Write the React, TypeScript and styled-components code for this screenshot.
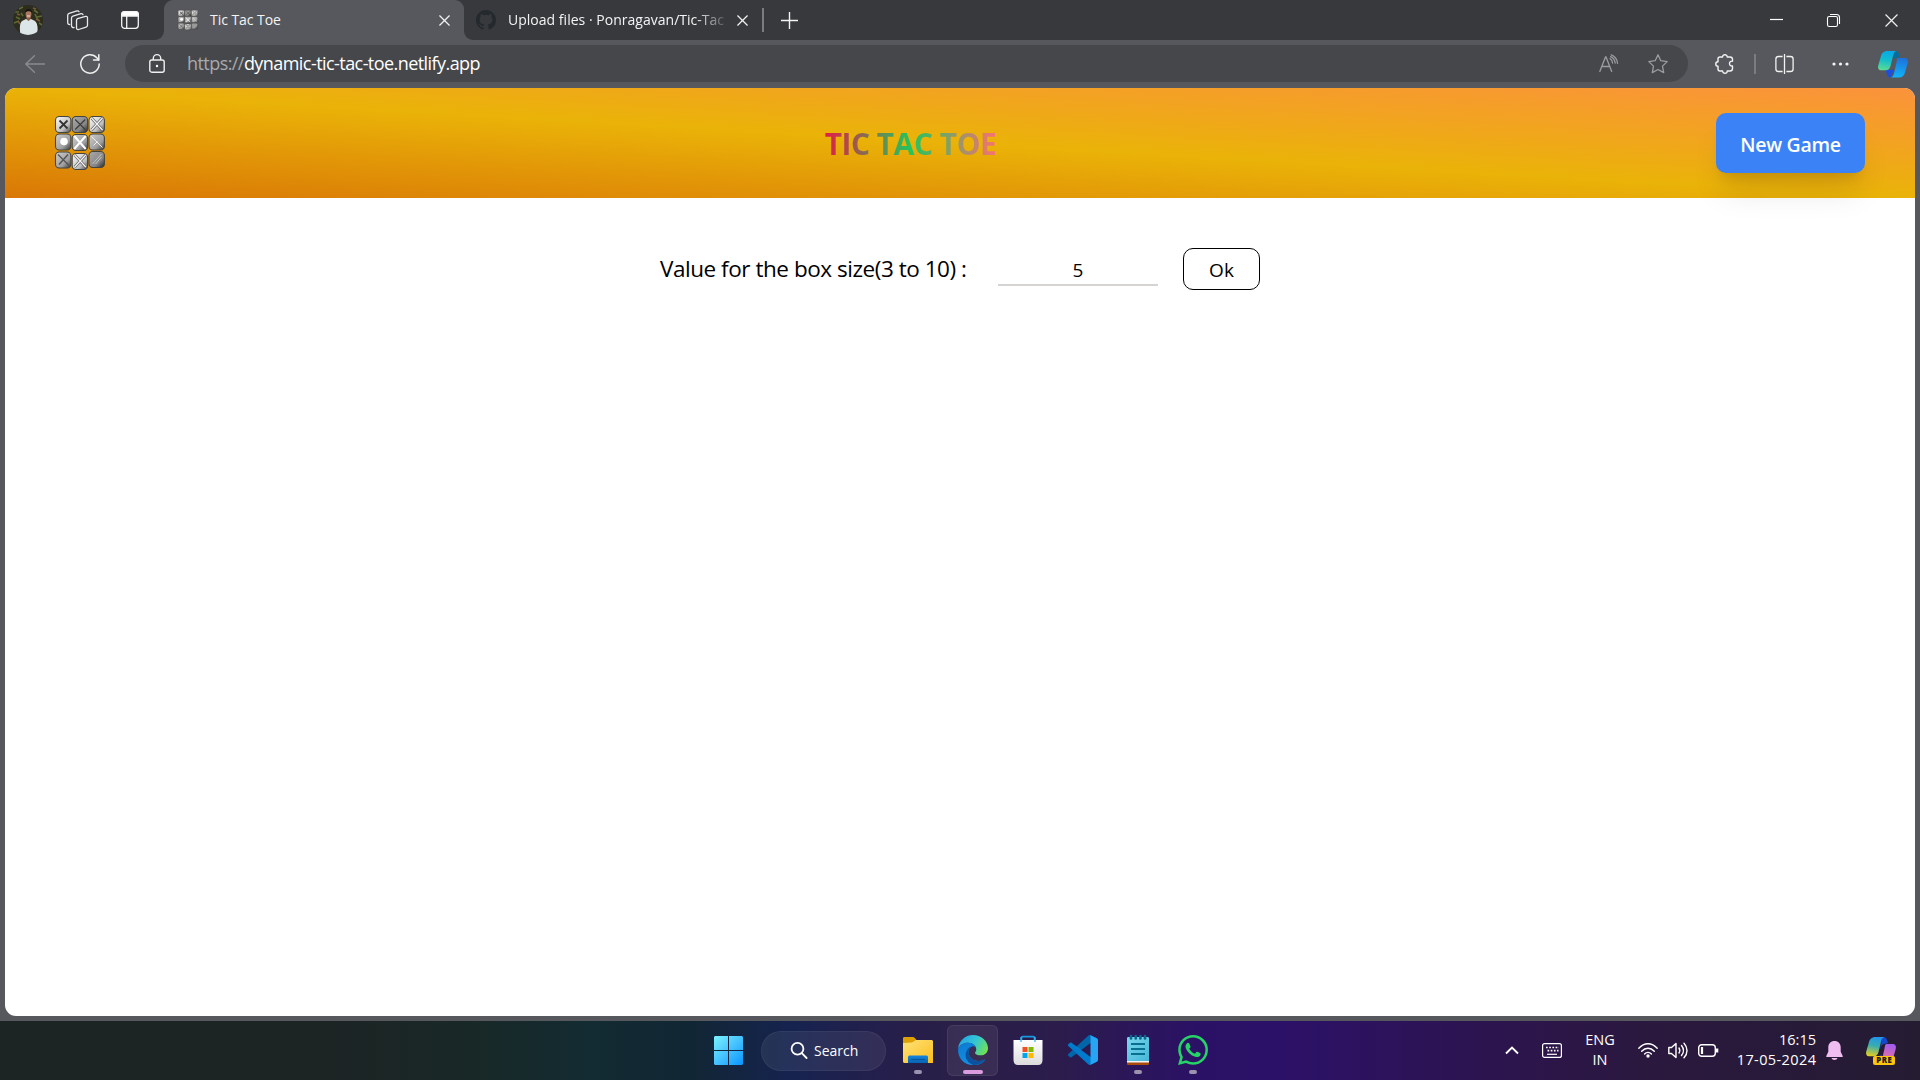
import React from "react";
import styled, { createGlobalStyle, css } from "styled-components";

const Global = createGlobalStyle`
  * { box-sizing: border-box; }
  html, body { margin: 0; padding: 0; overflow: hidden; background: #57585d; }
  body { font-family: "Open Sans", "Noto Sans", sans-serif; }
  svg { display: block; flex: none; overflow: visible; }
  button { font-family: inherit; cursor: pointer; }
`;

const Desktop = styled.div`
  width: 1920px;
  height: 1080px;
  display: flex;
  flex-direction: column;
  background: #57585d;
`;

const TabStrip = styled.div`
  height: 40px;
  flex: none;
  display: flex;
  background: #38393d;
  color: #f4f4f4;
`;

const Cell = styled.div<{ $w: number; $pt?: number }>`
  width: ${(p) => p.$w}px;
  height: 100%;
  flex: none;
  display: flex;
  align-items: center;
  justify-content: center;
  padding-top: ${(p) => p.$pt ?? 0}px;
`;

const ProfileTools = styled.div<{ $w: number }>`
  width: ${(p) => p.$w}px;
  display: flex;
  background: #38393d;
  border-bottom-right-radius: 9px;
`;

const ActiveWrap = styled.div`
  display: flex;
  background: linear-gradient(#38393d 50%, #57585d 50%);
`;

const TabTitle = styled.span<{ $fade?: boolean; $w: number; $ls?: number }>`
  width: ${(p) => p.$w}px;
  font-size: 14px;
  line-height: 20px;
  letter-spacing: ${(p) => p.$ls ?? 0}px;
  white-space: nowrap;
  ${(p) =>
    p.$fade &&
    css`
      mask-image: linear-gradient(to right, #000 86%, transparent 103%);
    `}
`;

const Tab = styled.div<{ $active?: boolean }>`
  width: 300px;
  height: 40px;
  display: flex;
  align-items: center;
  padding: 0 14px;
  gap: 12px;
  background: ${(p) => (p.$active ? "#57585d" : "#38393d")};
  border-radius: ${(p) => (p.$active ? "9px 9px 0 0" : "0 0 0 9px")};
  ${TabTitle} { margin-right: auto; }
`;

const InactiveTab = styled(Tab)`
  width: 298px;
  padding: 0 14px 0 12px;
`;

const Divider = styled.div<{ $h: number }>`
  width: 1.5px;
  height: ${(p) => p.$h}px;
  background: #7b7c80;
  align-self: center;
`;

const Spacer = styled.div`
  flex: 1;
`;

const Toolbar = styled.div`
  height: 48px;
  flex: none;
  display: flex;
  align-items: center;
  padding-bottom: 1px;
  color: #f2f2f2;
`;

const AddressBar = styled.div`
  width: 1563px;
  height: 37px;
  border-radius: 19px;
  background: #46474b;
  display: flex;
  align-items: center;
  padding: 0 20px 0 24px;
`;

const Url = styled.div`
  margin-left: 22px;
  padding-bottom: 1px;
  font-size: 18px;
  letter-spacing: -0.56px;
  line-height: 24px;
  color: #fff;
  white-space: nowrap;
`;

const Scheme = styled.span`
  color: #a9aaac;
`;

const AddressActions = styled.div`
  margin-left: auto;
  display: flex;
  align-items: center;
  gap: 29px;
  color: #9b9c9e;
`;

const Page = styled.main`
  width: 1910px;
  height: 928px;
  margin: 0 5px;
  flex: none;
  background: #fff;
  border-radius: 11px;
  overflow: hidden;
  color: #000;
`;

const Header = styled.header`
  height: 110px;
  padding: 0 50px;
  display: flex;
  align-items: center;
  justify-content: space-between;
  background: linear-gradient(to bottom left, #fb923c, #eab308, #d97706);
`;

const Title = styled.h1`
  margin: 2px 0 0;
  font-size: 30px;
  line-height: 40px;
  font-weight: 700;
  letter-spacing: -0.5px;
  background: linear-gradient(to right, #e11d48, #22c55e, #f87171);
  background-clip: text;
  -webkit-background-clip: text;
  color: transparent;
`;

const NewGame = styled.button`
  width: 149px;
  height: 60px;
  padding: 2px 0 0;
  border: 0;
  border-radius: 10px;
  background: #3b82f6;
  color: #fff;
  font-size: 19.5px;
  font-weight: 600;
  letter-spacing: -0.3px;
  box-shadow: 0 25px 31px -6px rgba(0, 0, 0, 0.1), 0 10px 12px -7px rgba(0, 0, 0, 0.1);
`;

const SizeForm = styled.div`
  display: flex;
  justify-content: center;
  align-items: center;
  padding-top: 50px;
  height: 92px;
`;

const Label = styled.label`
  width: 308px;
  font-size: 22.5px;
  letter-spacing: -0.46px;
  line-height: 30px;
  white-space: nowrap;
`;

const SizeInput = styled.input`
  width: 160px;
  height: 33px;
  margin: 0 25px 0 30px;
  padding: 3px 0 0;
  border: 0;
  border-bottom: 2px solid #d6d3d1;
  outline: 0;
  text-align: center;
  font: 19px "Open Sans", sans-serif;
  color: #000;
  background: transparent;
`;

const OkButton = styled.button`
  width: 77px;
  height: 42px;
  padding: 1px 0 0;
  border: 1px solid #000;
  border-radius: 10px;
  background: #fff;
  font-size: 19px;
  color: #000;
`;

const Taskbar = styled.footer`
  height: 59px;
  margin-top: 5px;
  flex: none;
  display: flex;
  align-items: center;
  color: #fff;
  background: linear-gradient(
    to right,
    #1c2424 0, #1c2424 330px, #192826 460px, #132b32 590px, #112634 690px,
    #16234f 790px, #241f4c 880px, #2a1f47 960px, #2b1c4c 1060px, #2b1166 1200px,
    #2c1168 1280px, #2c1450 1480px, #2b183f 1640px, #271a38 1800px, #251c32 1920px
  );
`;

const TaskGroup = styled.div`
  height: 100%;
  margin-left: 701px;
  display: flex;
  align-items: center;
`;

const SearchBox = styled.div`
  width: 125px;
  height: 40px;
  margin: 0 4px 0 5px;
  padding-bottom: 1px;
  border-radius: 20px;
  border: 1px solid rgba(255, 255, 255, 0.05);
  background: rgba(255, 255, 255, 0.07);
  display: flex;
  align-items: center;
  padding-left: 28px;
  gap: 6px;
  font-size: 14px;
  letter-spacing: 0;
`;

const TaskButton = styled.div<{ $active?: boolean }>`
  width: 51px;
  height: 51px;
  margin: 0 2px;
  border-radius: 6px;
  display: flex;
  flex-direction: column;
  align-items: center;
  padding-top: 9px;
  border: 1px solid ${(p) => (p.$active ? "rgba(255,255,255,.07)" : "transparent")};
  background: ${(p) => (p.$active ? "rgba(255,255,255,.07)" : "transparent")};
`;

const Indicator = styled.div<{ $active?: boolean }>`
  width: ${(p) => (p.$active ? 20 : 8)}px;
  height: 4px;
  margin-top: 5px;
  border-radius: 2px;
  background: ${(p) => (p.$active ? "#dc9de0" : "#9b93ad")};
`;

const Tray = styled.div`
  margin-left: auto;
  height: 100%;
  display: flex;
  align-items: center;
`;

const TrayText = styled.div<{ $w: number; $right?: boolean }>`
  width: ${(p) => p.$w}px;
  display: flex;
  flex-direction: column;
  align-items: ${(p) => (p.$right ? "flex-end" : "center")};
  padding-bottom: 1px;
  font-size: 14.5px;
  line-height: 20px;
`;

const DateLine = styled.span`
  letter-spacing: 0.4px;
  margin-right: -0.4px;
`;

const TrayIcon = styled.div<{ $ml: number }>`
  margin-left: ${(p) => p.$ml}px;
`;

const TILES = [
  { x: 0, y: 0, g: "light", m: "dark" },
  { x: 16.700, y: 0, g: "dark", m: "cut" },
  { x: 33.500, y: 0, g: "light", m: "etched" },
  { x: 0, y: 17.500, g: "mid", m: "o" },
  { x: 16.700, y: 18, g: "mid", m: "white" },
  { x: 33.500, y: 17.500, g: "mid", m: "slash" },
  { x: 0, y: 35.500, g: "mid", m: "grey" },
  { x: 16.700, y: 37, g: "light", m: "etched" },
  { x: 33.500, y: 35, g: "dark", m: "back" },
];

function TileMark({ kind }: { kind: string }) {
  switch (kind) {
    case "o":
      return <circle cx="9" cy="8" r="3.800" fill="#fff" />;
    case "dark":
      return <path d="M4.500 4.500l8 8m0-8l-8 8" stroke="#333" strokeWidth="1.800" />;
    case "cut":
      return <path d="M3.500 3.500l10 10m0-10l-10 10" stroke="#3d3d3d" strokeWidth="1.200" />;
    case "white":
      return <path d="M2.500 2l11.500 13M14 2L2.500 15" stroke="#fff" strokeWidth="1.900" />;
    case "grey":
      return <path d="M3 3l11 11M13 3L4 13" stroke="#555" strokeWidth="1.400" />;
    case "slash":
      return <path d="M3 3l11 11M5 12l4-4" stroke="#eee" strokeWidth="1" />;
    case "back":
      return <path d="M13 3L4 13M7 13l6-7" stroke="#c4c4c4" strokeWidth="1" />;
    default:
      return (
        <g fill="none">
          <path d="M3 2l11 12M14 2L3 14" stroke="#666" strokeWidth="2.600" />
          <path d="M3 2l11 12M14 2L3 14" stroke="#f5f5f5" strokeWidth="1.200" />
        </g>
      );
  }
}

function BoardLogo({ w, h, id }: { w: number; h: number; id: string }) {
  const stops: Record<string, string[]> = {
    light: ["#ededed", "#c0c0c0", "#444"],
    mid: ["#c4c4c4", "#9f9f9f", "#333"],
    dark: ["#a2a2a2", "#858585", "#222"],
  };
  return (
    <svg width={w} height={h} viewBox="0 0 50 54" preserveAspectRatio="none">
      <defs>
        {Object.keys(stops).map((k) => (
          <linearGradient key={k} id={id + k} x1="0" y1="0" x2="1" y2="1">
            <stop offset="0.150" stopColor={stops[k][0]} />
            <stop offset="0.650" stopColor={stops[k][1]} />
            <stop offset="1" stopColor={stops[k][2]} />
          </linearGradient>
        ))}
      </defs>
      {TILES.map((t) => (
        <g key={`${t.x}-${t.y}`} transform={`translate(${t.x} ${t.y})`}>
          <rect x="0.500" y="0.500" width="15.400" height="16" rx="3.800" fill={`url(#${id}${t.g})`} stroke="#45443f" strokeWidth="1.100" />
          <TileMark kind={t.m} />
        </g>
      ))}
    </svg>
  );
}

const Avatar = () => (
  <svg width="30" height="30" viewBox="0 0 30 30">
    <defs>
      <clipPath id="avatar"><circle cx="15" cy="15" r="15" /></clipPath>
    </defs>
    <g clipPath="url(#avatar)">
      <rect width="30" height="30" fill="#2c2d1c" />
      <path d="M2 7h4M3 12l4 2M1 18l5-2M21 5l4 3M24 12l5-1M22 9l3 6M26 18l3 2M6 4l4-2M8 8l2 3" stroke="#5d6a33" strokeWidth="1.600" />
      <path d="M4 9l3 1M23 14l4 2M5 16l2 3M20 3l3 1" stroke="#80593a" strokeWidth="1.500" />
      <path d="M7.500 30c-1-6-1-12 1.500-14l4-2h5l4 2c3 3 3 8 2 14z" fill="#dce5e8" />
      <path d="M13.500 10h4v4.500l-2 1.500-2-1.500z" fill="#8b5e48" />
      <ellipse cx="15.500" cy="9" rx="2.900" ry="4.200" fill="#a97861" />
      <path d="M12 8c-.5-5.500 7.500-5.500 7 0-1-2.500-5.500-2.500-7 0z" fill="#17130f" />
      <path d="M14 11h3" stroke="#f3e5dd" />
    </g>
  </svg>
);

const Workspaces = () => (
  <svg width="22" height="21" viewBox="0 0 22 21" fill="none" stroke="#e9e9e9" strokeWidth="1.300" strokeLinejoin="round" strokeLinecap="round">
    <path d="M10.500 8.700l8-2.300c1-.3 2 .3 2 1.500v7.300c0 1-.5 1.600-1.400 1.900l-7.500 2.400c-1.200.3-2.100-.3-2.100-1.500v-7.500c0-1 .3-1.500 1-1.800z" />
    <path d="M7 17.500c-1.500.2-2.500-.5-2.500-2V8c0-1 .5-1.600 1.400-1.900L14 3.600c1-.2 1.800.2 2 1" />
    <path d="M2.700 14.500C1.300 14.500.7 13.700.7 12.500V5.300c0-1 .5-1.600 1.400-1.900L10 .9c1-.2 1.700.1 2 .8" />
  </svg>
);

const SidebarTabs = () => (
  <svg width="18" height="18" viewBox="0 0 18 18" fill="none" stroke="#f4f4f4" strokeWidth="1.300">
    <rect x=".7" y=".7" width="16.600" height="16.600" rx="3" />
    <path d="M.7 3.500c0-2 1-2.800 3-2.800h10.600c2 0 3 .8 3 2.800V5H.7z" fill="#fff" />
    <path d="M5.700 5v12" />
  </svg>
);

const Close = ({ s = 11, c = "#f0f0f0", w = 1.4 }: { s?: number; c?: string; w?: number }) => (
  <svg width={s} height={s} viewBox="0 0 12 12" stroke={c} strokeWidth={w}>
    <path d="M.5.5l11 11m0-11l-11 11" />
  </svg>
);

const GitHub = () => (
  <svg width="20" height="20" viewBox="0 0 16 16" fill="#24292e">
    <path d="M8 0C3.580 0 0 3.580 0 8c0 3.540 2.290 6.530 5.470 7.590.4.070.55-.17.55-.38 0-.19-.01-.82-.01-1.490-2.010.37-2.530-.49-2.690-.94-.09-.23-.48-.94-.82-1.130-.28-.15-.68-.52-.01-.53.63-.01 1.080.58 1.230.82.72 1.210 1.870.87 2.330.66.07-.52.28-.87.51-1.070-1.780-.2-3.640-.89-3.640-3.950 0-.87.31-1.590.82-2.150-.08-.2-.36-1.020.08-2.120 0 0 .67-.21 2.200.82a7.400 7.400 0 0 1 4 0c1.530-1.040 2.200-.82 2.200-.82.44 1.100.16 1.920.08 2.120.51.56.82 1.270.82 2.150 0 3.070-1.870 3.750-3.650 3.950.29.25.54.73.54 1.480 0 1.070-.01 1.930-.01 2.200 0 .21.15.46.55.38A8 8 0 0 0 16 8c0-4.420-3.580-8-8-8z" />
  </svg>
);

const Plus = () => (
  <svg width="17" height="17" viewBox="0 0 17 17" stroke="#f4f4f4" strokeWidth="1.400">
    <path d="M8.500 0v17M0 8.500h17" />
  </svg>
);

const Minimize = () => (
  <svg width="13" height="2" viewBox="0 0 13 2"><path d="M0 .5h13" stroke="#fff" strokeWidth="1.200" /></svg>
);

const Restore = () => (
  <svg width="13" height="13" viewBox="0 0 13 13" fill="none" stroke="#fff" strokeWidth="1.100">
    <rect x=".5" y="2.500" width="10" height="10" rx="1.800" />
    <path d="M3 .5h6.500c2 0 3 1 3 3V10" />
  </svg>
);

const Back = () => (
  <svg width="20" height="18" viewBox="0 0 20 18" fill="none" stroke="#8a8b8e" strokeWidth="1.400" strokeLinecap="round">
    <path d="M19.500 9H.8M9.500.8L.8 9l8.700 8.200" />
  </svg>
);

const Refresh = () => (
  <svg width="20" height="20" viewBox="0 0 20 20" fill="none" stroke="#f0f0f0" strokeWidth="1.500" strokeLinecap="round" strokeLinejoin="round">
    <path d="M19.200 10A9.200 9.200 0 1 1 16.800 3.800L18.700 6" />
    <path d="M18.800.8V6h-5.300" />
  </svg>
);

const Lock = () => (
  <svg width="16" height="19" viewBox="0 0 16 19" fill="none" stroke="#f0f0f0" strokeWidth="1.400">
    <rect x=".8" y="6" width="14.400" height="12.200" rx="2" />
    <path d="M4.300 6V4.300a3.700 3.700 0 0 1 7.400 0V6" />
    <circle cx="8" cy="12" r="1.200" fill="#fff" stroke="none" />
  </svg>
);

const ReadAloud = () => (
  <svg width="20" height="19" viewBox="0 0 20 19" fill="none" stroke="currentColor" strokeWidth="1.300" strokeLinecap="round">
    <path d="M.8 17.500L6.500 3h.5l5.700 14.500M3 12.500h7.500" />
    <path d="M11 4.500c1.600 1 2.500 2.600 2.600 4.500M12.200.8c3.800 1.400 6 4.600 6.300 8.500M11.600 2.600c2.800 1.300 4.300 3.500 4.600 6.400" />
  </svg>
);

const Star = () => (
  <svg width="20" height="20" viewBox="0 0 20 20" fill="none" stroke="currentColor" strokeWidth="1.300" strokeLinejoin="round">
    <path d="M10 .8l2.800 5.900 6.400.9-4.700 4.500 1.200 6.500L10 15.500l-5.700 3.100 1.200-6.500L.8 7.600l6.400-.9z" />
  </svg>
);

const Puzzle = () => (
  <svg width="19" height="20" viewBox="0 0 19 20" fill="none" stroke="currentColor" strokeWidth="1.400" strokeLinejoin="round">
    <path d="M5 3h2.600c-.2-3 4.700-3 4.600 0H15c1.500 0 2.500 1 2.500 2.500v1.700c-4-.5-4 5.300 0 4.800v2.500c0 1.500-1 2.500-2.500 2.500h-2.800c.3 3-4.600 3-4.600 0H5c-1.200 0-2-.7-2-2v-2.800c-3-.2-3-4.400 0-4.500V5c0-1.200.8-2 2-2z" />
  </svg>
);

const Split = () => (
  <svg width="19" height="20" viewBox="0 0 19 20" fill="none" stroke="currentColor" strokeWidth="1.300">
    <path d="M7.600 2.500H3.500c-1.600 0-2.600 1-2.600 2.600v9.800c0 1.600 1 2.600 2.600 2.600h4.100M11.400 2.500h4.100c1.600 0 2.600 1 2.600 2.600v9.800c0 1.600-1 2.600-2.600 2.600h-4.100M9.500 0v20" />
  </svg>
);

const Dots = () => (
  <svg width="17" height="4" viewBox="0 0 17 4" fill="#f4f4f4">
    <circle cx="2" cy="2" r="1.600" /><circle cx="8.500" cy="2" r="1.600" /><circle cx="15" cy="2" r="1.600" />
  </svg>
);

function Copilot({ pre }: { pre?: boolean }) {
  const id = pre ? "cpPre" : "cp";
  return (
    <svg width={pre ? 29 : 30} height={pre ? 28 : 27} viewBox={pre ? "0 0 29 28" : "0 0 30 27"}>
      <defs>
        <linearGradient id={id + "a"} x1="0.500" y1="0" x2="0.300" y2="1">
          <stop offset="0" stopColor={pre ? "#2395ea" : "#08a8e8"} />
          <stop offset=".45" stopColor={pre ? "#37adb0" : "#12bbcf"} />
          <stop offset="1" stopColor={pre ? "#e4cf22" : "#5bdc91"} />
        </linearGradient>
        <linearGradient id={id + "b"} x1="0.500" y1="0" x2="0.300" y2="1">
          <stop offset="0" stopColor={pre ? "#a25cf0" : "#1d73dc"} />
          <stop offset="1" stopColor={pre ? "#ff7783" : "#12b5fa"} />
        </linearGradient>
      </defs>
      <path d="M16 0h1c3 0 4 2 5 6l-4 1c-2 0-3 2-4 6l2-11z" fill={pre ? "#1748cb" : "#066c9a"} />
      <path d="M8 19h5l3-1-3 8c-3 1-4-1-5-7z" fill="#1b4fe0" />
      <path d="M10 0h9c-3 0-3.500 3-4.500 7l-2 8c-1 3-2 4.300-5 4.300H3.500C.5 19.300-.5 17 .4 14L3 5C4 1.500 6 0 10 0z" fill={`url(#${id}a)`} />
      <path d="M20.500 7H26c3.500 0 4.500 2 3.700 5L27 21.500c-1 3.500-3 5-6 5h-9c2.500 0 3.500-2 4.300-5l2.200-10C19 8.500 19 7 20.500 7z" fill={`url(#${id}b)`} />
      {pre && (
        <g>
          <rect x="7" y="19" width="22" height="9" rx="2" fill="#ffc40c" />
          <text x="18.300" y="26.300" textAnchor="middle" fontFamily="Open Sans" fontWeight="800" fontSize="7.800" letterSpacing=".6" fill="#231b24">PRE</text>
        </g>
      )}
    </svg>
  );
}

const Windows = () => (
  <svg width="29" height="29" viewBox="0 0 29 29">
    <defs>
      <linearGradient id="win" x1="0" y1="0" x2="29" y2="29" gradientUnits="userSpaceOnUse">
        <stop offset="0" stopColor="#7af2ff" /><stop offset=".5" stopColor="#46c3ff" /><stop offset="1" stopColor="#0794ff" />
      </linearGradient>
    </defs>
    <path d="M1 0h13v14H0V1zM15 0h13l1 1v13H15zM0 15h14v14H1l-1-1zM15 15h14v13l-1 1H15z" fill="url(#win)" />
  </svg>
);

const Search = () => (
  <svg width="18" height="17" viewBox="0 0 18 17" fill="none" stroke="#fff" strokeWidth="1.800" strokeLinecap="round">
    <circle cx="7.500" cy="6.800" r="5.900" /><path d="M11.800 11.200l4.800 4.800" />
  </svg>
);

const Folder = () => (
  <svg width="30" height="30" viewBox="0 0 30 30">
    <defs>
      <linearGradient id="fold" x1="0" y1="0" x2="1" y2="1"><stop offset="0" stopColor="#ffe27a" /><stop offset="1" stopColor="#fbbd1c" /></linearGradient>
      <linearGradient id="foldb" x1="0" y1="0" x2="0" y2="1"><stop offset="0" stopColor="#1285df" /><stop offset="1" stopColor="#0765b5" /></linearGradient>
    </defs>
    <path d="M0 3.500C0 2.500.6 2 1.500 2h8c1 0 1.600.3 2.200 1L14 5.500V10H0z" fill="#dfa006" />
    <path d="M0 8l9-.5L13 5h16l1 1v22H1l-1-1z" fill="url(#fold)" />
    <path d="M5 28v-5.500c0-1.500.7-2 2-2h16c1.300 0 2 .5 2 2V28z" fill="url(#foldb)" />
    <path d="M8 24.500h14" stroke="#07559a" strokeWidth="1.200" />
  </svg>
);

const Edge = () => (
  <svg width="30" height="30" viewBox="0 0 24 24">
    <defs>
      <linearGradient id="edgeTop" x1="0" y1=".3" x2="1" y2=".7"><stop offset="0" stopColor="#26a5e3" /><stop offset=".5" stopColor="#33c5d5" /><stop offset="1" stopColor="#72e34d" /></linearGradient>
      <linearGradient id="edgeLow" x1="0" y1="0" x2=".6" y2="1"><stop offset="0" stopColor="#0c79d2" /><stop offset="1" stopColor="#1394e3" /></linearGradient>
    </defs>
    <path d="M.1 11C.6 4.600 5.700 0 12 0c7.300 0 12 5.400 12 10.500 0 3.600-2.700 5.700-5.900 5.700-3 0-4.500-1-4.500-1.900 0-.6 1-.9 1-2.900 0-2.700-2.700-5.200-6.500-5.200C4.500 6.200 1.300 8 .1 11z" fill="url(#edgeTop)" />
    <path d="M.1 11C1.300 8 4.500 6.200 8.100 6.200c3 0 5.200 1.600 6.100 3.500-1-.8-2-.9-2.800-.7-3 1.300-3.700 5.400-1.800 8.400 2.200 3.500 7.500 4.400 11.400 2.400.5-.2.800.2.500.6A12 12 0 0 1 12 24C4.500 24-.5 18 .1 11z" fill="url(#edgeLow)" />
    <path d="M9.300 9.800c-5.500 4.300-3.600 12.500 3.200 14.200 3.500 0 6.900-1.500 9-3.600.3-.4 0-.8-.5-.6-4 2-9.200 1.100-11.400-2.400-1.600-2.600-1.400-5.700.7-7.700z" fill="#0b519e" />
  </svg>
);

const Store = () => (
  <svg width="30" height="30" viewBox="0 0 30 30">
    <defs><linearGradient id="bag" x1="0" y1="0" x2="0" y2="1"><stop offset="0" stopColor="#fff" /><stop offset="1" stopColor="#dcdcdc" /></linearGradient></defs>
    <path d="M8.500 7V3c0-1 .4-1.300 1.300-1.300h10.400c.9 0 1.300.3 1.300 1.300v4" fill="none" stroke="#1997e0" strokeWidth="1.700" />
    <path d="M.5 5h29v20c0 3-1.500 5-4.500 5H5C2 30 .5 28 .5 25z" fill="url(#bag)" />
    <path d="M8 2v5M22 2v5" stroke="#37b5ee" strokeWidth="1.300" />
    <path d="M9.500 12h5v5h-5z" fill="#f25022" /><path d="M15.500 12h5v5h-5z" fill="#7fba00" />
    <path d="M9.500 18h5v5h-5z" fill="#00a4ef" /><path d="M15.500 18h5v5h-5z" fill="#ffb900" />
  </svg>
);

const VSCode = () => (
  <svg width="30" height="30" viewBox="0 0 100 100">
    <path d="M96 11L75 1c-2-1-5-.6-7 1L1 63c-2 2-2 5 0 6l6 5c1.500 1.400 4 1.500 5 .3L93 13c3-2 6 0 6 3z" fill="#0065a9" />
    <path d="M96 89L75 99c-2 1-5 .6-7-1L1 37c-2-2-2-5 0-6l6-5c1.500-1.400 4-1.500 5-.3L93 87c3 2 6 0 6-3z" fill="#007acc" />
    <path d="M75 99c-2 1-5 .6-7-1 2.500 2.500 7 .7 7-3V5c0-3.700-4.500-5.500-7-3 2-1.600 5-2 7-1l21 10c2 1 4 3 4 6v66c0 3-2 5-4 6z" fill="#27a4f4" />
  </svg>
);

const Notepad = () => (
  <svg width="22" height="30" viewBox="0 0 22 30">
    <defs><linearGradient id="note" x1="0" y1="0" x2="1" y2="1"><stop offset="0" stopColor="#7ad8ee" /><stop offset="1" stopColor="#45b6d8" /></linearGradient></defs>
    <path d="M0 25h22v3.500c0 1-.5 1.500-1.500 1.500h-19C.5 30 0 29.500 0 28.500z" fill="#a84b0c" />
    <path d="M0 24h22v3.500H0z" fill="#f4f4f4" />
    <path d="M0 3.500C0 2.500.5 2 1.500 2h19c1 0 1.500.5 1.500 1.500V26H0z" fill="url(#note)" />
    <path d="M4 9h14M4 14h14M4 19h14" stroke="#086f91" strokeWidth="1.800" />
    {[4, 8.700, 13.400, 18].map((x) => <path key={x} d={`M${x} 1v2.500`} stroke="#0a668a" strokeWidth="2.600" strokeLinecap="round" />)}
  </svg>
);

const WhatsApp = () => (
  <svg width="30" height="30" viewBox="0 0 24 24" fill="#25d366">
    <path d="M17.472 14.382c-.297-.149-1.758-.867-2.030-.967-.273-.099-.471-.148-.67.15-.197.297-.767.966-.94 1.164-.173.199-.347.223-.644.075-.297-.15-1.255-.463-2.390-1.475-.883-.788-1.480-1.761-1.653-2.059-.173-.297-.018-.458.13-.606.134-.133.298-.347.446-.52.149-.174.198-.298.298-.497.099-.198.05-.371-.025-.52-.075-.149-.669-1.612-.916-2.207-.242-.579-.487-.5-.669-.51-.173-.008-.371-.01-.57-.01-.198 0-.52.074-.792.372-.272.297-1.040 1.016-1.040 2.479 0 1.462 1.065 2.875 1.213 3.074.149.198 2.096 3.200 5.077 4.487.709.306 1.262.489 1.694.625.712.227 1.360.195 1.871.118.571-.085 1.758-.719 2.006-1.413.248-.694.248-1.289.173-1.413-.074-.124-.272-.198-.57-.347zM12.051 21.785h-.004a9.870 9.870 0 0 1-5.031-1.378l-.361-.214-3.741.982.998-3.648-.235-.374a9.860 9.860 0 0 1-1.510-5.260c.001-5.450 4.436-9.884 9.888-9.884a9.820 9.820 0 0 1 6.988 2.898 9.825 9.825 0 0 1 2.893 6.994c-.003 5.450-4.437 9.884-9.885 9.884zM20.464 3.488A11.815 11.815 0 0 0 12.050 0C5.495 0 .16 5.335.157 11.892c0 2.096.547 4.142 1.588 5.945L.057 24l6.305-1.654a11.882 11.882 0 0 0 5.683 1.448h.005c6.554 0 11.890-5.335 11.893-11.893a11.821 11.821 0 0 0-3.480-8.413z" />
  </svg>
);

const Chevron = () => (
  <svg width="14" height="9" viewBox="0 0 14 9" fill="none" stroke="#fff" strokeWidth="1.900"><path d="M1 7.500l6-6 6 6" /></svg>
);

const Keyboard = () => (
  <svg width="20" height="15" viewBox="0 0 20 15" fill="none" stroke="#fff" strokeWidth="1.200">
    <rect x=".6" y=".6" width="18.800" height="13.800" rx="2" />
    <path d="M4 4.500h13M5.500 7.700h11" strokeWidth="1.700" strokeDasharray="1.700 1.500" />
    <path d="M5 11.300h10" />
  </svg>
);

const Wifi = () => (
  <svg width="20" height="15" viewBox="0 0 20 15" fill="none" stroke="#fff" strokeWidth="1.400" strokeLinecap="round">
    <path d="M.8 5.300c5.300-6 13.100-6 18.400 0M3.700 8.300c3.700-4 8.900-4 12.600 0M6.600 11c2-2.200 4.800-2.200 6.800 0" />
    <circle cx="10" cy="13" r="1.700" fill="#fff" stroke="none" />
  </svg>
);

const Volume = () => (
  <svg width="20" height="17" viewBox="0 0 20 17" fill="none" stroke="#fff" strokeWidth="1.400" strokeLinecap="round" strokeLinejoin="round">
    <path d="M.8 5.500h2.700L8 1.500v14l-4.500-4H.8zM11 6c1 1.500 1 3.500 0 5M13.500 3.500c2.400 3 2.400 7 0 10M16 1.200c4 4.300 4 10.300 0 14.600" />
  </svg>
);

const Battery = () => (
  <svg width="21" height="13" viewBox="0 0 21 13" fill="none" stroke="#fff" strokeWidth="1.400">
    <rect x=".7" y=".7" width="16.600" height="11.600" rx="3" /><path d="M4 3v7" strokeWidth="2.200" /><path d="M19 4.500v4" strokeWidth="2.600" />
  </svg>
);

const Bell = () => (
  <svg width="17" height="20" viewBox="0 0 17 20" fill="#efbdf0">
    <path d="M8.500 0C4.800 0 2.300 2.700 2.300 6.200v4.600L.3 15v1h16.400v-1l-2-4.200V6.200C14.700 2.700 12.200 0 8.500 0zM5.500 17h6c-.3 1.300-1.500 2-3 2s-2.700-.7-3-2z" />
  </svg>
);

export default function App() {
  return (
    <>
      <Global />
      <Desktop>
        <TabStrip>
          <ActiveWrap>
            <ProfileTools $w={164}>
              <Cell $w={56}><Avatar /></Cell>
              <Cell $w={44}><Workspaces /></Cell>
              <Cell $w={60}><SidebarTabs /></Cell>
            </ProfileTools>
            <Tab $active>
              <BoardLogo w={20} h={20} id="fav" />
              <TabTitle $w={80} $ls={-0.05}>Tic Tac Toe</TabTitle>
              <Close />
            </Tab>
            <InactiveTab>
              <GitHub />
              <TabTitle $w={219} $fade $ls={0.02}>Upload files · Ponragavan/Tic-Tac</TabTitle>
              <Close />
            </InactiveTab>
          </ActiveWrap>
          <Divider $h={24} />
          <Cell $w={51}><Plus /></Cell>
          <Spacer />
          <Cell $w={57}><Minimize /></Cell>
          <Cell $w={57}><Restore /></Cell>
          <Cell $w={58}><Close s={13} w={1.1} /></Cell>
        </TabStrip>

        <Toolbar>
          <Cell $w={70}><Back /></Cell>
          <Cell $w={40}><Refresh /></Cell>
          <Cell $w={15} />
          <AddressBar>
            <Lock />
            <Url><Scheme>https://</Scheme>dynamic-tic-tac-toe.netlify.app</Url>
            <AddressActions><ReadAloud /><Star /></AddressActions>
          </AddressBar>
          <Cell $w={6} />
          <Cell $w={60}><Puzzle /></Cell>
          <Divider $h={20} />
          <Cell $w={57}><Split /></Cell>
          <Cell $w={55}><Dots /></Cell>
          <Cell $w={50} $pt={1}><Copilot /></Cell>
        </Toolbar>

        <Page>
          <Header>
            <BoardLogo w={50} h={54} id="logo" />
            <Title>TIC TAC TOE</Title>
            <NewGame>New Game</NewGame>
          </Header>
          <SizeForm>
            <Label htmlFor="size">Value for the box size(3 to 10) :</Label>
            <SizeInput id="size" defaultValue="5" />
            <OkButton>Ok</OkButton>
          </SizeForm>
        </Page>

        <Taskbar>
          <TaskGroup>
            <Cell $w={55}><Windows /></Cell>
            <SearchBox><Search />Search</SearchBox>
            <TaskButton><Folder /><Indicator /></TaskButton>
            <TaskButton $active><Edge /><Indicator $active /></TaskButton>
            <TaskButton><Store /></TaskButton>
            <TaskButton><VSCode /></TaskButton>
            <TaskButton><Notepad /><Indicator /></TaskButton>
            <TaskButton><WhatsApp /><Indicator /></TaskButton>
          </TaskGroup>
          <Tray>
            <Cell $w={14}><Chevron /></Cell>
            <TrayIcon $ml={23}><Keyboard /></TrayIcon>
            <TrayText $w={76}><span>ENG</span><span>IN</span></TrayText>
            <TrayIcon $ml={0}><Wifi /></TrayIcon>
            <TrayIcon $ml={10}><Volume /></TrayIcon>
            <TrayIcon $ml={10}><Battery /></TrayIcon>
            <TrayText $w={97} $right><span>16:15</span><DateLine>17-05-2024</DateLine></TrayText>
            <TrayIcon $ml={10}><Bell /></TrayIcon>
            <TrayIcon $ml={23}><Copilot pre /></TrayIcon>
            <Cell $w={25} />
          </Tray>
        </Taskbar>
      </Desktop>
    </>
  );
}
